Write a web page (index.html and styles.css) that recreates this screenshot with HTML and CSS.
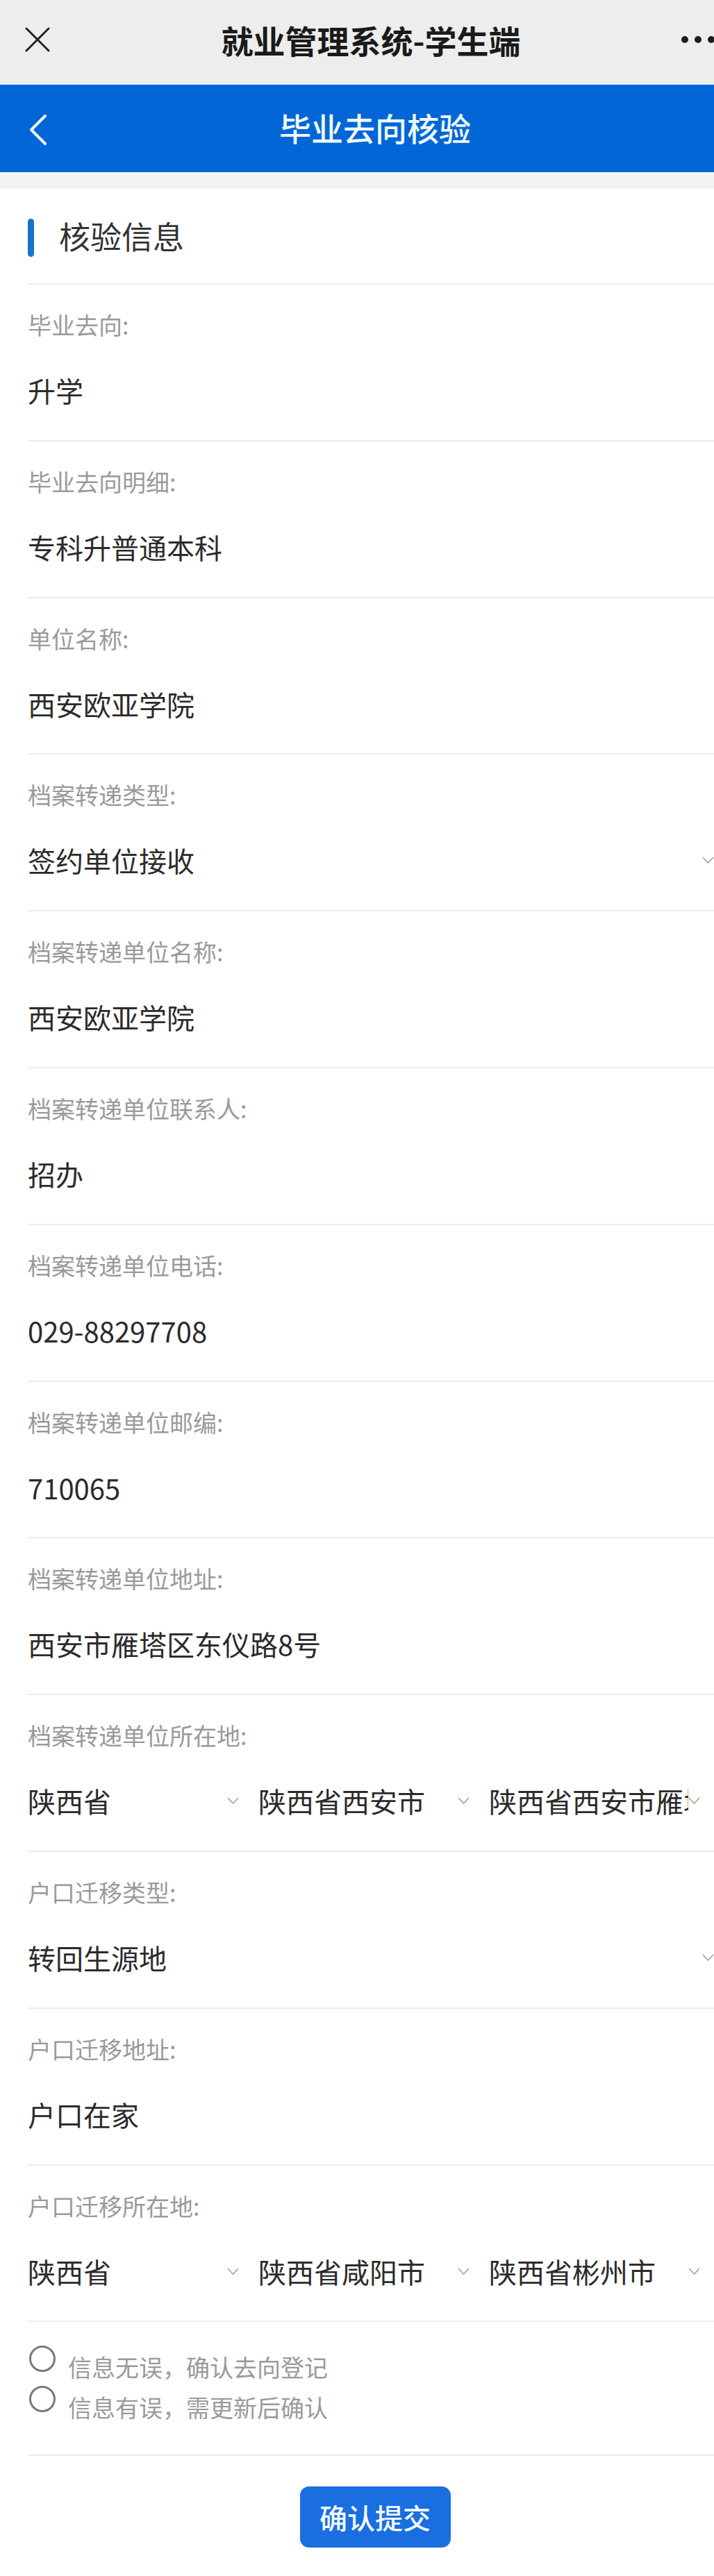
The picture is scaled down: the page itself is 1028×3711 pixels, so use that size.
FILE: index.html
```html
<!DOCTYPE html>
<html lang="zh-CN">
<head>
<meta charset="utf-8">
<title>毕业去向核验</title>
<link rel="stylesheet" href="styles.css">
</head>
<body>
<div class="page">
  <header class="wx-bar">
    <div class="wx-left">
      <svg class="icon-close" viewBox="0 0 36 36" width="36" height="36"><path d="M2 2 L34 34 M34 2 L2 34" fill="none" stroke="#222" stroke-width="3" stroke-linecap="round"/></svg>
    </div>
    <div class="wx-title">就业管理系统-学生端</div>
    <div class="wx-right"><span class="dot"></span><span class="dot"></span><span class="dot"></span></div>
  </header>

  <div class="nav-bar">
    <div class="nav-left">
      <svg class="icon-back" viewBox="0 0 26 46" width="26" height="46"><path d="M23 3 L3 23 L23 43" fill="none" stroke="#eefaff" stroke-width="4" stroke-linecap="round" stroke-linejoin="round"/></svg>
    </div>
    <div class="nav-title">毕业去向核验</div>
    <div class="nav-right"></div>
  </div>

  <div class="gap"></div>

  <main class="card">
    <div class="section-head">
      <span class="section-mark"></span>
      <h2 class="section-title">核验信息</h2>
    </div>

    <div class="field">
      <div class="field-label">毕业去向:</div>
      <div class="field-value">升学</div>
    </div>
    <div class="field">
      <div class="field-label">毕业去向明细:</div>
      <div class="field-value">专科升普通本科</div>
    </div>
    <div class="field">
      <div class="field-label">单位名称:</div>
      <div class="field-value">西安欧亚学院</div>
    </div>
    <div class="field">
      <div class="field-label">档案转递类型:</div>
      <div class="field-value select single">
        <span class="select-text">签约单位接收</span>
        <svg class="caret" viewBox="0 0 17 10" width="17" height="10"><path d="M1 1 L8.5 9 L16 1" fill="none" stroke="#9a9a9a" stroke-width="1.5"/></svg>
      </div>
    </div>
    <div class="field">
      <div class="field-label">档案转递单位名称:</div>
      <div class="field-value">西安欧亚学院</div>
    </div>
    <div class="field">
      <div class="field-label">档案转递单位联系人:</div>
      <div class="field-value">招办</div>
    </div>
    <div class="field">
      <div class="field-label">档案转递单位电话:</div>
      <div class="field-value">029-88297708</div>
    </div>
    <div class="field">
      <div class="field-label">档案转递单位邮编:</div>
      <div class="field-value">710065</div>
    </div>
    <div class="field">
      <div class="field-label">档案转递单位地址:</div>
      <div class="field-value">西安市雁塔区东仪路8号</div>
    </div>
    <div class="field">
      <div class="field-label">档案转递单位所在地:</div>
      <div class="field-value selects">
        <div class="select triple"><span class="select-text">陕西省</span><svg class="caret" viewBox="0 0 17 10" width="17" height="10"><path d="M1 1 L8.5 9 L16 1" fill="none" stroke="#9a9a9a" stroke-width="1.5"/></svg></div>
        <div class="select triple"><span class="select-text">陕西省西安市</span><svg class="caret" viewBox="0 0 17 10" width="17" height="10"><path d="M1 1 L8.5 9 L16 1" fill="none" stroke="#9a9a9a" stroke-width="1.5"/></svg></div>
        <div class="select triple"><span class="select-text">陕西省西安市雁塔区</span><svg class="caret" viewBox="0 0 17 10" width="17" height="10"><path d="M1 1 L8.5 9 L16 1" fill="none" stroke="#9a9a9a" stroke-width="1.5"/></svg></div>
      </div>
    </div>
    <div class="field">
      <div class="field-label">户口迁移类型:</div>
      <div class="field-value select single">
        <span class="select-text">转回生源地</span>
        <svg class="caret" viewBox="0 0 17 10" width="17" height="10"><path d="M1 1 L8.5 9 L16 1" fill="none" stroke="#9a9a9a" stroke-width="1.5"/></svg>
      </div>
    </div>
    <div class="field">
      <div class="field-label">户口迁移地址:</div>
      <div class="field-value">户口在家</div>
    </div>
    <div class="field">
      <div class="field-label">户口迁移所在地:</div>
      <div class="field-value selects">
        <div class="select triple"><span class="select-text">陕西省</span><svg class="caret" viewBox="0 0 17 10" width="17" height="10"><path d="M1 1 L8.5 9 L16 1" fill="none" stroke="#9a9a9a" stroke-width="1.5"/></svg></div>
        <div class="select triple"><span class="select-text">陕西省咸阳市</span><svg class="caret" viewBox="0 0 17 10" width="17" height="10"><path d="M1 1 L8.5 9 L16 1" fill="none" stroke="#9a9a9a" stroke-width="1.5"/></svg></div>
        <div class="select triple"><span class="select-text">陕西省彬州市</span><svg class="caret" viewBox="0 0 17 10" width="17" height="10"><path d="M1 1 L8.5 9 L16 1" fill="none" stroke="#9a9a9a" stroke-width="1.5"/></svg></div>
      </div>
    </div>

    <div class="confirm">
      <div class="radio"><span class="radio-circle"></span><span class="radio-text">信息无误，确认去向登记</span></div>
      <div class="radio"><span class="radio-circle"></span><span class="radio-text">信息有误，需更新后确认</span></div>
    </div>

    <div class="actions">
      <button class="submit" type="button">确认提交</button>
    </div>
  </main>
</div>
</body>
</html>
```

FILE: styles.css
```css
html, body {
  margin: 0;
  padding: 0;
  overflow: hidden;
  background: #ffffff;
}

body {
  font-family: "Noto Sans CJK SC", "Noto Sans", sans-serif;
  color: #2b2b2b;
}

.page {
  width: 1068px;
  background: #ffffff;
}

/* WeChat top bar */
.wx-bar {
  height: 122px;
  box-sizing: border-box;
  padding-bottom: 8px;
  background: #ededed;
  display: grid;
  grid-template-columns: 1fr auto 1fr;
  align-items: center;
}

.wx-left {
  padding-left: 36px;
  display: flex;
  align-items: center;
}

.icon-close {
  display: block;
}

.wx-title {
  font-size: 46px;
  line-height: 60px;
  font-weight: 700;
  color: #1a1a1a;
}

.wx-right {
  display: flex;
  justify-content: flex-end;
  align-items: center;
  gap: 9px;
  padding-right: 39px;
}

.dot {
  width: 10px;
  height: 10px;
  border-radius: 50%;
  background: #1c1c1c;
}

/* Blue nav bar */
.nav-bar {
  height: 126px;
  background: #0366d6;
  display: grid;
  grid-template-columns: 1fr auto 1fr;
  align-items: center;
}

.nav-left {
  padding-left: 42px;
  padding-top: 4px;
  display: flex;
  align-items: center;
}

.icon-back {
  display: block;
}

.nav-title {
  font-size: 46px;
  line-height: 60px;
  font-weight: 500;
  color: #effbff;
  padding-bottom: 4px;
  padding-left: 12px;
}

.gap {
  height: 24px;
  background: #f3f3f3;
}

/* Card */
.card {
  background: #ffffff;
}

.section-head {
  height: 136px;
  display: flex;
  align-items: center;
  padding-left: 40px;
  gap: 36px;
}

.section-mark {
  width: 9px;
  height: 55px;
  border-radius: 5px;
  background: #1873c8;
  margin-top: 4px;
}

.section-title {
  margin: 0;
  font-size: 45px;
  line-height: 56px;
  font-weight: 400;
  color: #333333;
}

.field {
  margin-left: 40px;
  border-top: 2px solid #ededed;
  padding-top: 36px;
  padding-bottom: 43.8px;
}

.field-label {
  font-size: 34px;
  line-height: 44px;
  color: #9a9a9a;
}

.field-value {
  margin-top: 44px;
  font-size: 40px;
  line-height: 56px;
  height: 56px;
  color: #2b2b2b;
}

.select {
  display: flex;
  align-items: center;
}

.single {
  width: 988px;
  justify-content: space-between;
}

.selects {
  width: 988px;
  display: grid;
  grid-template-columns: repeat(3, 324px);
  column-gap: 8px;
}

.triple {
  padding-right: 20px;
}

.select-text {
  flex: 1;
  min-width: 0;
  overflow: hidden;
  white-space: nowrap;
}

.caret {
  flex: none;
  display: block;
}

/* Confirm radios */
.confirm {
  margin-left: 40px;
  border-top: 2px solid #ededed;
  border-bottom: 2px solid #ededed;
  padding-top: 34px;
  padding-bottom: 41px;
}

.radio {
  height: 58px;
  display: flex;
  align-items: flex-start;
}

.radio-circle {
  flex: none;
  width: 38px;
  height: 38px;
  box-sizing: border-box;
  border: 3px solid #7a7a7a;
  border-radius: 50%;
  margin-left: 2px;
}

.radio-text {
  margin-left: 18px;
  margin-top: 11px;
  font-size: 34px;
  line-height: 40px;
  color: #9a9a9a;
}

/* Submit */
.actions {
  padding-top: 43.6px;
  padding-bottom: 41px;
  padding-left: 12px;
  display: flex;
  justify-content: center;
}

.submit {
  width: 217px;
  height: 88px;
  border: none;
  border-radius: 13px;
  background: #1a6ee0;
  color: #f4fbff;
  font-family: "Noto Sans CJK SC", "Noto Sans", sans-serif;
  font-size: 40px;
  font-weight: 500;
  line-height: 56px;
  padding: 0;
}
```
